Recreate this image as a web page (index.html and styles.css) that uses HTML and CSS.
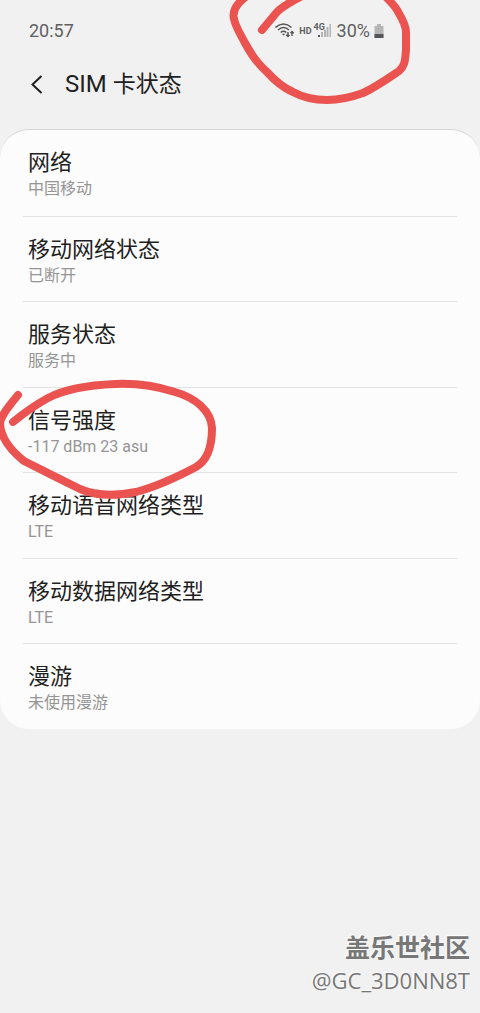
FILE: index.html
```html
<!DOCTYPE html>
<html lang="zh-CN">
<head>
<meta charset="utf-8">
<meta name="viewport" content="width=device-width, initial-scale=1">
<title>SIM 卡状态</title>
<link rel="stylesheet" href="styles.css">
</head>
<body>
<div class="screen">
  <div class="status-bar">
    <span class="clock">20:57</span>
    <div class="status-icons">
      <svg class="wifi" viewBox="0 0 20 16" fill="none" stroke="#555" stroke-width="1.6">
        <path d="M0.500 4.500Q8.500-2.500 16.500 4.500M3 7Q8.500 2 14 7M5.700 9.500Q8.500 7 11.300 9.500"/>
        <path d="M7 11L8.500 12.500L10 11Q8.500 10 7 11Z" fill="#555" stroke="none"/>
        <path d="M13 9V13.500M11.200 11.700L13 13.500L14.500 12M17 13V8.500M15.400 10.100L17 8.500L18.800 10.300" stroke-width="1.400"/>
      </svg>
      <span class="hd">HD</span>
      <span class="signal">
        <svg class="bars" viewBox="0 0 18 16" fill="#b5b5b5">
          <path d="M4 12H6V14H4Z" fill="#555"/>
          <path d="M7 9H9V14H7ZM10 7H12V14H10ZM12.500 4H14.500V14H12.500ZM15.500 1H17V14H15.500Z"/>
        </svg>
        <span class="network">4G</span>
      </span>
      <span class="percent">30%</span>
      <svg class="battery" viewBox="0 0 10 14">
        <path d="M3 0H7V2H9.500V14H0.500V2H3Z" fill="#b5b5b5"/>
        <path d="M0.500 10H9.500V14H0.500Z" fill="#555"/>
      </svg>
    </div>
    <svg class="mark mark-status" viewBox="0 0 190 110">
      <path d="M42 30L57 12C62 7 70 2 84-5M28-5C16 4 12 11 14 19C16 28 21 35 25 43C32 56 39 65 47 72C55 81 64 88 73 92C84 98 96 100 107 100C120 100 132 97 143 93C156 87 170 77 179 71C186 65 185 58 186 50L186 32C186 24 181 17 177 10C175 6 171 2 164-5"/>
    </svg>
  </div>

  <header class="header">
    <button class="back" type="button" aria-label="返回">
      <svg viewBox="0 0 12 20"><path d="M11 1L2 9.500L11 18"/></svg>
    </button>
    <h1 class="title">SIM <span class="title-han">卡状态</span></h1>
  </header>

  <main class="card">
    <section class="row"><h2 class="label">网络</h2><p class="value">中国移动</p></section>
    <section class="row"><h2 class="label">移动网络状态</h2><p class="value">已断开</p></section>
    <section class="row"><h2 class="label">服务状态</h2><p class="value">服务中</p></section>
    <section class="row">
      <h2 class="label">信号强度</h2><p class="value">-117 dBm 23 asu</p>
      <svg class="mark mark-signal" viewBox="0 0 220 120">
        <path d="M18 14C8 26 0 36 0 43C1 57 10 69 24 80C40 88 62 99 80 108C96 115 116 115 136 111C155 106 179 95 196 86C208 79 212 64 212 47C211 30 196 17 175 11C153 4 136 2 115 3C91 4 67 7 48 17C37 23 24 32 13 41"/>
      </svg>
    </section>
    <section class="row"><h2 class="label">移动语音网络类型</h2><p class="value">LTE</p></section>
    <section class="row"><h2 class="label">移动数据网络类型</h2><p class="value">LTE</p></section>
    <section class="row"><h2 class="label">漫游</h2><p class="value">未使用漫游</p></section>
  </main>

  <footer class="watermark">
    <div class="community">盖乐世社区</div>
    <div class="author">@GC_3D0NN8T</div>
  </footer>
</div>
</body>
</html>
```
FILE: styles.css
```css
* {
  box-sizing: border-box;
}

body {
  margin: 0;
  background: #f1f1f1;
  color: #1f1f1f;
  font-family: Roboto, "Noto Sans CJK SC", sans-serif;
}

h1, h2, p {
  margin: 0;
  font-weight: 400;
}

svg {
  display: block;
}

.screen {
  display: flex;
  flex-direction: column;
  min-height: 100vh;
  overflow: hidden;
}

.status-bar {
  position: relative;
  display: flex;
  align-items: center;
  justify-content: space-between;
  padding: 20px 96px 0 29px;
  line-height: 22px;
  font-size: 18px;
  color: #606060;
}

.status-icons {
  display: flex;
  align-items: center;
}

.wifi {
  width: 20px;
  height: 16px;
}

.hd {
  margin-left: 4px;
  font-size: 9px;
  line-height: 16px;
  font-weight: 700;
}

.signal {
  position: relative;
  margin-left: 2px;
}

.bars {
  width: 18px;
  height: 16px;
}

.network {
  position: absolute;
  top: 0;
  left: 0;
  font-size: 9px;
  line-height: 8px;
  font-weight: 700;
}

.percent {
  margin-left: 5px;
}

.battery {
  width: 10px;
  height: 14px;
  margin-left: 4px;
}

.mark {
  position: absolute;
  z-index: 1;
  overflow: visible;
  fill: none;
  stroke: #eb5350;
  stroke-width: 8;
  stroke-linecap: round;
  stroke-linejoin: round;
  pointer-events: none;
}

.mark-status {
  top: 0;
  right: 70px;
  width: 190px;
  height: 110px;
}

.header {
  display: flex;
  align-items: center;
  gap: 22px;
  padding: 25px 30px 27px;
}

.back {
  padding: 0;
  border: 0;
  background: none;
}

.back svg {
  width: 13px;
  height: 20px;
  fill: none;
  stroke: #1f1f1f;
  stroke-width: 2;
}

.title {
  font-size: 24px;
  line-height: 34px;
}

.title-han {
  font-size: 23px;
}

.card {
  display: grid;
  grid-auto-rows: 1fr;
  min-height: 600px;
  padding: 0 23px;
  border-top: 1px solid #d6d6d6;
  border-radius: 29px;
  background: #fcfcfc;
}

.row {
  position: relative;
  padding: 18px 5px 0;
}

.row + .row {
  border-top: 1px solid #e3e3e3;
}

.label {
  font-size: 22px;
  line-height: 30px;
}

.value {
  font-size: 16px;
  line-height: 22px;
  color: #959595;
}

.mark-signal {
  top: -7px;
  left: -23px;
  width: 220px;
  height: 120px;
}

.watermark {
  margin-top: auto;
  padding: 0 10px 16px;
  text-align: right;
  color: #777;
  font-family: "Open Sans", "Noto Sans CJK SC", sans-serif;
  text-shadow: -1px -1px 1px #fff;
}

.community {
  font-size: 25px;
  line-height: 32px;
  font-weight: 700;
}

.author {
  font-size: 22px;
  line-height: 34px;
}
```
